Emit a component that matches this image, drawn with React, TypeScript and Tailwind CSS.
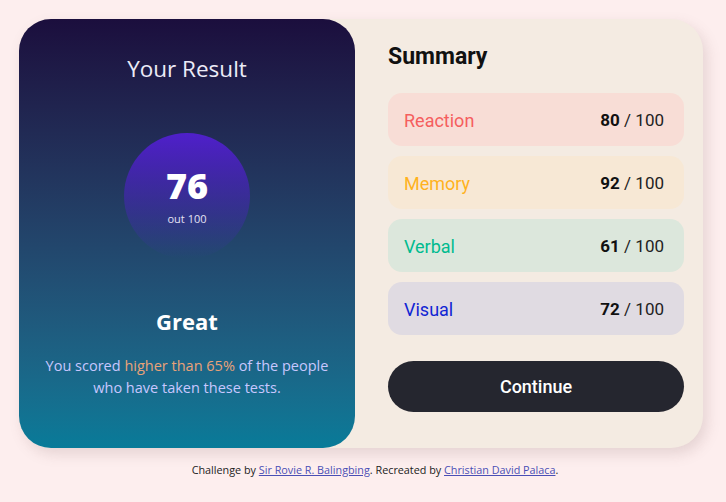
import { FC } from "react";

const rows = [
  { label: "Reaction", score: 80, bg: "bg-[#f8ddd6]", text: "text-[#f55e5e]" },
  { label: "Memory", score: 92, bg: "bg-[#f7e8d5]", text: "text-[#ffb21e]" },
  { label: "Verbal", score: 61, bg: "bg-[#dce7dc]", text: "text-[#00bb8f]" },
  { label: "Visual", score: 72, bg: "bg-[#e0dbe2]", text: "text-[#1125d4]" },
];

const App: FC = () => {
  return (
    <main className="flex min-h-[502px] w-full flex-col items-start bg-[#fdeeee] px-[19px] pt-[19px] font-['Open_Sans',sans-serif]">
      <section className="flex h-[429px] w-[684px] rounded-[32px] bg-[#f4ebe2] shadow-[4px_6px_14px_rgba(120,90,90,0.18)]">
        <div className="flex w-[336px] flex-col items-center rounded-[32px] bg-gradient-to-b from-[#1b0e3d] to-[#077b99] pt-[35px]">
          <h2 className="text-[22.5px] font-medium leading-[30px] text-[#ecebf7]">Your Result</h2>
          <div className="mt-[49px] flex h-[126px] w-[126px] flex-col items-center justify-center rounded-full bg-gradient-to-b from-[#4f20cb] to-[#2a2aa0]/0">
            <span className="text-[36px] font-extrabold leading-[40px] text-white">76</span>
            <span className="mt-[6px] text-[11px] leading-[14px] text-[#e4e2f4]">out 100</span>
          </div>
          <h3 className="mt-[47px] text-[22px] font-bold leading-[30px] text-white">Great</h3>
          <p className="mt-[19px] w-[300px] text-center text-[14.5px] leading-[22px] text-[#c8c7ff]">
            You scored <span className="text-[#eaa278]">higher than 65%</span> of the people
            <br />
            who have taken these tests.
          </p>
        </div>
        <div className="flex flex-1 flex-col pl-[33px] pr-[19px] pt-[23px] font-['Roboto',sans-serif]">
          <h2 className="text-[23px] font-bold leading-[30px] text-[#111]">Summary</h2>
          <ul className="mt-[21px] flex flex-col gap-[10px]">
            {rows.map((r) => (
              <li
                key={r.label}
                className={`flex h-[53px] items-center justify-between rounded-[14px] pl-[16px] pr-[20px] pt-[2px] ${r.bg}`}
              >
                <span className={`text-[18px] leading-none ${r.text}`}>{r.label}</span>
                <span className="text-[17px] leading-none text-[#222]">
                  <b className="font-bold text-[#111]">{r.score}</b> / 100
                </span>
              </li>
            ))}
          </ul>
          <button className="mt-[26px] h-[51px] w-full rounded-full bg-[#25262f] text-[18px] font-medium text-white">
            Continue
          </button>
        </div>
      </section>
      <footer className="mt-[14px] w-[684px] pl-[28px] text-center text-[10.8px] text-[#222]">
        Challenge by{" "}
        <a href="#" className="text-[#4a4fb5] underline">
          Sir Rovie R. Balingbing
        </a>
        . Recreated by{" "}
        <a href="#" className="text-[#4a4fb5] underline">
          Christian David Palaca
        </a>
        .
      </footer>
    </main>
  );
};

export default App;
